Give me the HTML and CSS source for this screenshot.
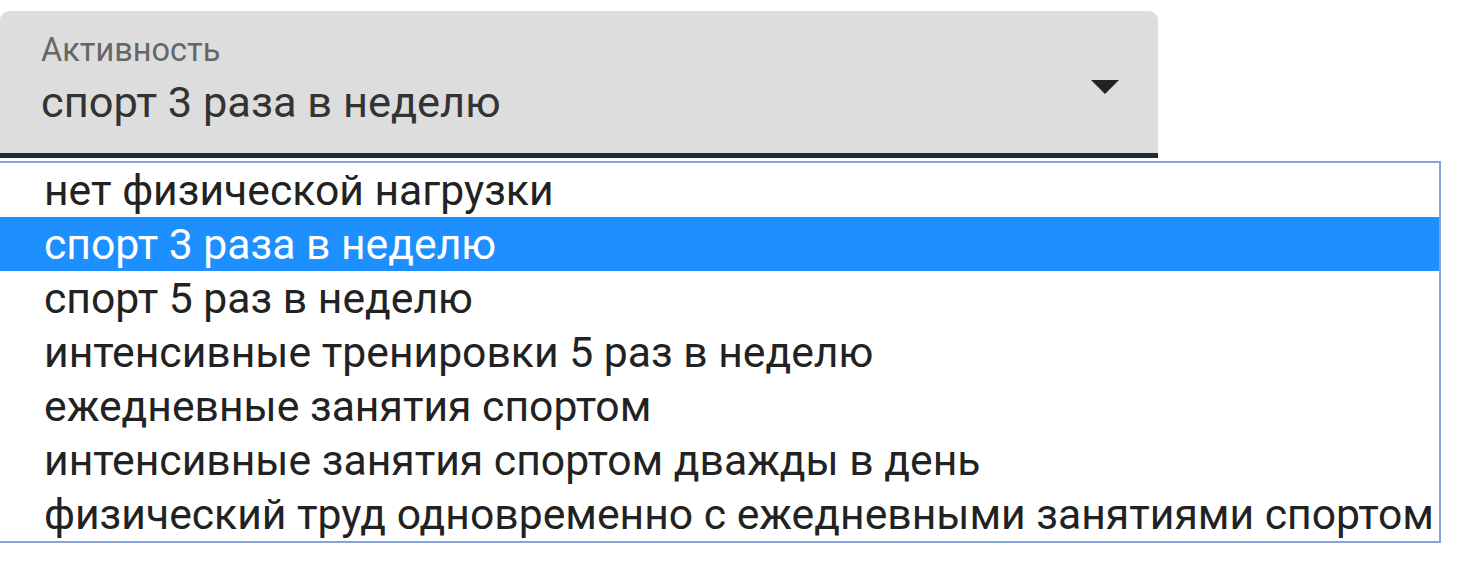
FILE: index.html
```html
<!DOCTYPE html>
<html lang="ru">
<head>
<meta charset="utf-8">
<link rel="stylesheet" href="styles.css">
</head>
<body>
<div class="page">
  <div class="field">
    <div class="field-text">
      <div class="field-label">Активность</div>
      <div class="field-value">спорт 3 раза в неделю</div>
    </div>
    <svg class="arrow" width="28" height="14" viewBox="0 0 28 14"><path d="M0 0 H28 L14 14 Z" fill="#222"/></svg>
  </div>
  <ul class="options">
    <li class="option">нет физической нагрузки</li>
    <li class="option selected">спорт 3 раза в неделю</li>
    <li class="option">спорт 5 раз в неделю</li>
    <li class="option">интенсивные тренировки 5 раз в неделю</li>
    <li class="option">ежедневные занятия спортом</li>
    <li class="option">интенсивные занятия спортом дважды в день</li>
    <li class="option">физический труд одновременно с ежедневными занятиями спортом</li>
  </ul>
</div>
</body>
</html>
```
FILE: styles.css
```css
html, body {
  margin: 0;
  padding: 0;
  background: #fff;
}
body {
  font-family: Roboto, "Noto Sans", sans-serif;
}
.page {
  padding-top: 11px;
  display: flex;
  flex-direction: column;
  align-items: flex-start;
}
.field {
  width: 1158px;
  height: 142px;
  box-sizing: content-box;
  background: #dddddd;
  border-radius: 9px 9px 0 0;
  border-bottom: 5px solid #1f2b35;
  display: flex;
  align-items: flex-start;
  justify-content: space-between;
}
.field-text {
  padding-left: 41px;
  padding-top: 22px;
  display: flex;
  flex-direction: column;
  gap: 10px;
}
.field-label {
  font-size: 32.5px;
  line-height: 34px;
  color: #666;
}
.field-value {
  font-size: 43.4px;
  line-height: 52px;
  color: #333;
}
.arrow {
  margin-right: 39px;
  margin-top: 69px;
}
.options {
  list-style: none;
  margin: 3px 0 0 0;
  padding: 0;
  width: 1439px;
  border: 2px solid #86a2d6;
  border-left: none;
  background: #fff;
}
.option {
  height: 54px;
  line-height: 54px;
  padding-left: 44px;
  font-size: 42.7px;
  color: #222;
  white-space: nowrap;
}
.option.selected {
  background: #1e8fff;
  color: #fff;
}
```
